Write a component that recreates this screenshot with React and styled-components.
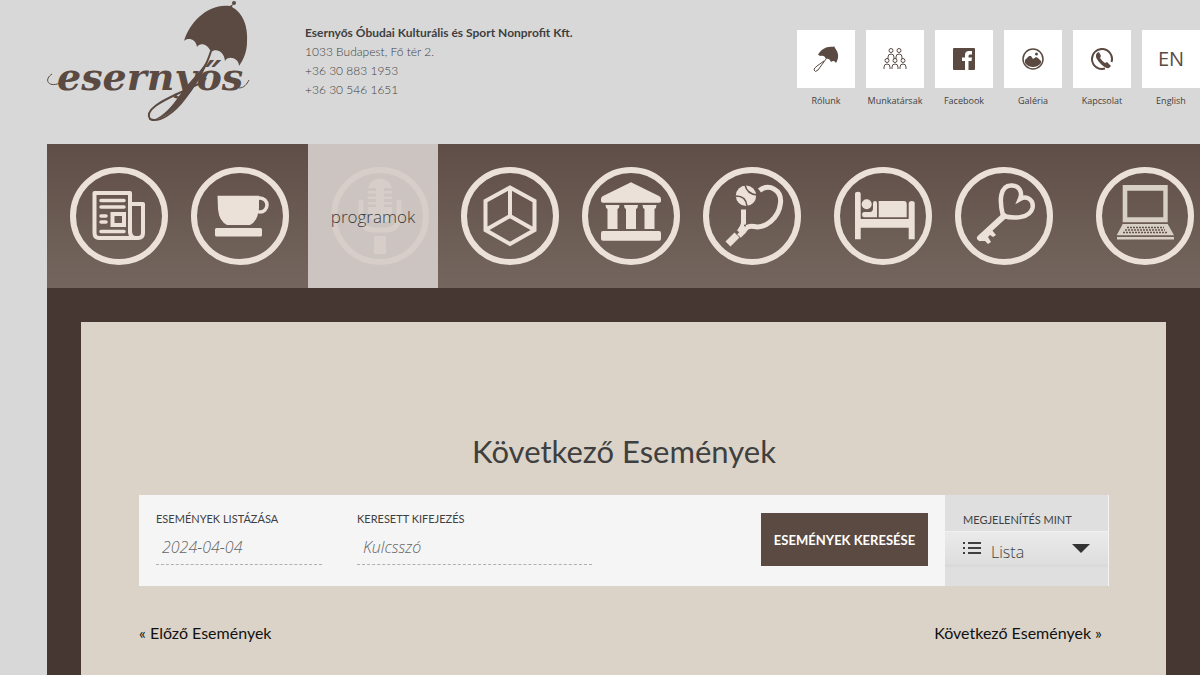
import React from 'react';
import styled, { createGlobalStyle, css } from 'styled-components';

const brown = '#5a4a42';
const cream = '#ece1d9';
const narrow = 'Lato, "Open Sans", sans-serif';
const light = '"Open Sans", "Noto Sans", sans-serif';

const GlobalStyle = createGlobalStyle`
  *, *::before, *::after { box-sizing: border-box; }
  body {
    margin: 0;
    background: #d8d8d8;
    color: #3f3f3f;
    font-family: ${narrow};
  }
`;

const Page = styled.div`
  display: flex;
  flex-direction: column;
  min-height: 100vh;
  padding-left: 47px;
`;

const Header = styled.header`
  display: flex;
  align-items: flex-start;
  height: 144px;
`;

const LogoLink = styled.a`
  display: block;
  width: 258px;
  height: 125px;
`;

const Address = styled.address`
  padding-top: 23px;
  font-style: normal;
  font-weight: 300;
  font-size: 12px;
  line-height: 19px;
  white-space: nowrap;
`;

const Company = styled.strong`
  display: block;
  font-weight: 700;
`;

const AddressLine = styled.span`
  display: block;
`;

const QuickLinks = styled.nav`
  display: flex;
  gap: 11px;
  margin-left: auto;
  padding-top: 30px;
`;

const QuickLink = styled.a`
  width: 58px;
  color: #3f3f3f;
  font-family: ${light};
  font-size: 9px;
  line-height: 26px;
  text-align: center;
  text-decoration: none;
  white-space: nowrap;
`;

const Tile = styled.span`
  display: flex;
  align-items: center;
  justify-content: center;
  height: 58px;
  background: #fff;
  color: ${brown};
  font-size: 20px;
`;

const MainNav = styled.nav`
  display: grid;
  grid-template-columns: 121fr 140fr 130fr 121fr 121fr 131fr 121fr 141fr 127fr;
  height: 144px;
  background: linear-gradient(#5f4e47, #74665e);
`;

const NavItem = styled.a`
  position: relative;
  padding: 23px 0 0 23px;
  color: ${cream};
  text-decoration: none;
  ${(p) => p.$active && css`
    background: #cbc4c0;
    color: #d7cec9;
  `}
`;

const NavLabel = styled.span`
  position: absolute;
  inset: 0;
  display: flex;
  align-items: center;
  justify-content: center;
  color: #3f3936;
  font-family: ${light};
  font-weight: 300;
  font-size: 17px;
`;

const Main = styled.main`
  display: flex;
  flex: 1;
  padding: 34px 34px 0;
  background: #463732;
`;

const Panel = styled.section`
  flex: 1;
  padding: 105px 57px 0 58px;
  background: #dbd3c7;
`;

const Title = styled.h1`
  margin: 0;
  font-weight: 400;
  font-size: 31px;
  line-height: 48px;
  text-align: center;
`;

const FilterBar = styled.form`
  display: flex;
  height: 91px;
  margin-top: 20px;
  background: #f5f5f5;
`;

const Filters = styled.div`
  display: flex;
  flex: 1;
  align-items: flex-start;
  gap: 35px;
  padding: 18px 17px;
`;

const Field = styled.div`
  flex: 0 1 ${(p) => p.$width}px;
`;

const Label = styled.label`
  display: block;
  font-size: 11px;
  line-height: 12px;
  text-transform: uppercase;
  white-space: nowrap;
`;

const TextInput = styled.input`
  display: block;
  width: 100%;
  height: 40px;
  padding: 5px 6px 0;
  border: 0;
  border-bottom: 1px dashed #b0b0b0;
  background: transparent;
  color: #666;
  font: italic 300 16px/20px ${light};
  &::placeholder { color: #666; opacity: 1; }
`;

const SearchButton = styled.button`
  width: 167px;
  height: 53px;
  margin-left: auto;
  padding: 0;
  border: 0;
  background: ${brown};
  color: #fff;
  font: 700 13px/20px ${narrow};
  text-transform: uppercase;
  white-space: nowrap;
`;

const ViewPicker = styled.div`
  width: 164px;
  padding-top: 19px;
  border-right: 1px solid #f5f5f5;
  background: #dfdfdf;
`;

const ViewLabel = styled(Label)`
  padding-left: 18px;
`;

const SelectWrap = styled.div`
  display: flex;
  align-items: center;
  height: 37px;
  margin-top: 5px;
  padding: 0 18px 3px;
  border-top: 1px solid #f0f0f0;
  background: linear-gradient(#eaeaea, #dedede 88%, #d8d8d8 94%, #dfdfdf);
`;

const Select = styled.select`
  flex: 1;
  height: 32px;
  padding: 6px 0 0 10px;
  border: 0;
  appearance: none;
  background: transparent;
  color: #3f3f3f;
  font: 300 16px/20px ${light};
`;

const Pager = styled.nav`
  display: flex;
  justify-content: space-between;
  padding: 35px 7px 0 0;
`;

const PagerLink = styled.a`
  color: #111;
  font-size: 16px;
  line-height: 24px;
  text-decoration: none;
`;

const Logo = () => (
  <svg width="203" height="125" viewBox="7 0 203 125" role="img" aria-label="Esernyős" fill={brown}>
    <circle cx="194" cy="3" r="2" />
    <path d="M193 4 L192 7 C203 13 208 26 207 42 C207 51 204 59 199 66 C199 58 188 55 185 61 C184 51 176 48 171 52 C168 44 160 42 157 47 C156 39 148 37 144 41 C150 21 169 3 190 6 Z" />
    <path d="M171 51 C166 68 157 82 146 97 C133 115 118 123 110 119 C104 110 122 101 137 94 C158 84 163 83 166 78" fill="none" stroke={brown} strokeWidth="2" />
    <path d="M168 59 C163 73 155 87 144 99 C134 112 122 119 113 120 C124 116 132 106 139 96 C150 80 160 73 168 59Z" />
    <path d="M12 74 C3 80 9 88 20 83 C28 80 33 78 37 75 M199 88 C204 88 207 84 209 80" fill="none" stroke={brown} />
    <text x="17" y="90" fontFamily='"DejaVu Serif", serif' fontStyle="italic" fontWeight="700" fontSize="38">esernyős</text>
  </svg>
);

const UmbrellaIcon = () => (
  <svg width="26" height="28" viewBox="0 0 26 28" fill={brown}>
    <path d="M21 1 L22 3 C26 8 26 13 23 18 C22 16 20 15 18 17 C17 14 15 13 13 14 C12 11 10 10 7 11 C6 10 6 10 5 10 C8 4 14 1 20 2Z" />
    <path d="M13 14 L5 25 Q2 28 1 25 Q1 23 4 21 L11 16" fill="none" stroke={brown} />
  </svg>
);

const Person = ({ x, y }) => (
  <g transform={`translate(${x} ${y})`}>
    <circle cx="0" cy="2.5" r="2" />
    <path d="M-3 11 V9 Q-3 6 0 6 Q3 6 3 9 V11" />
  </g>
);

const PeopleIcon = () => (
  <svg width="24" height="24" viewBox="0 0 24 24" fill="none" stroke={brown} strokeWidth="1">
    <Person x={8} y={1} />
    <Person x={16} y={1} />
    <Person x={4} y={11} />
    <Person x={12} y={11} />
    <Person x={20} y={11} />
  </svg>
);

const FacebookIcon = () => (
  <svg width="22" height="22" viewBox="0 0 22 22">
    <rect width="22" height="22" rx="1" fill={brown} />
    <path d="M12 22 V13 H9 V9.500 H12 V7 Q12 3 16 3 H19 V6.500 H17 Q15.500 6.500 15.500 8 V9.500 H19 L18.500 13 H15.500 V22Z" fill="#fff" />
  </svg>
);

const GalleryIcon = () => (
  <svg width="22" height="22" viewBox="0 0 22 22">
    <circle cx="11" cy="11" r="10" fill="none" stroke={brown} strokeWidth="1.500" />
    <path d="M3 15 L3 12 L7 8 L9 8 L11 11 L14 9 L16 10 L19 13 V15 Q16 19 11 19 Q6 19 3 15Z" fill={brown} />
    <circle cx="14.500" cy="6" r="1.500" fill={brown} />
  </svg>
);

const PhoneIcon = () => (
  <svg width="22" height="22" viewBox="0 0 22 22">
    <path d="M14 20.500 A10 10 0 1 1 20.500 14" fill="none" stroke={brown} strokeWidth="2" />
    <path d="M6 5 L8 4 L10 8 L9 10 Q11 13 14 15 L16 14 L20 18 L18 20 Q14 21 8 14 Q3 8 6 5Z" fill={brown} />
  </svg>
);

const Ring = ({ children }) => (
  <svg width="98" height="98" viewBox="0 0 98 98" fill="currentColor" aria-hidden="true">
    <circle cx="49" cy="49" r="46" fill="none" stroke="currentColor" strokeWidth="6" />
    {children}
  </svg>
);

const line = { fill: 'none', stroke: 'currentColor', strokeWidth: 4 };

const NewsIcon = () => (
  <Ring>
    <g {...line} strokeLinejoin="round" strokeLinecap="round">
      <path d="M60 66 V26 H24.500 V66 Q24.500 71 29 71 H68 Q73 71 73 66 V37 H62 M60 64 Q60 71 66 71" />
      <path d="M31 33.500 H54 M31 40 H54 M31 49 H36 M31 55 H36 M31 64.500 H54" strokeWidth="3.500" />
      <path d="M42.500 47 H54 V58 H42.500Z" strokeLinejoin="miter" />
    </g>
  </Ring>
);

const CupIcon = () => (
  <Ring>
    <path d="M26.500 28.700 H68 V41 Q67 54 59 58 H36 Q28 54 27 42Z" />
    <circle cx="69" cy="38" r="7" {...line} strokeWidth="3.500" />
    <rect x="24" y="61" width="47" height="8.500" rx="1.500" />
  </Ring>
);

const MicIcon = () => (
  <Ring>
    <path d="M37 21 A12.300 12.300 0 0 1 61 21 H53 V24 H61.300 V26.500 H53 V29.500 H61.300 V32 H53 V35 H61.300 V37.500 H53 V40 H61.300 V45 Q60 56 49 56 Q38 56 36.700 45 V40 H45 V37.500 H36.700 V35 H45 V32 H36.700 V29.500 H45 V26.500 H36.700 V24 H45 V21Z" />
    <path d="M30 35 V50 Q31 63 43 63 H55 Q67 63 68 50 V35" {...line} strokeWidth="5" strokeLinecap="round" />
    <rect x="43" y="69" width="12" height="18" />
  </Ring>
);

const CubeIcon = () => (
  <Ring>
    <path d="M49 20.500 L73.500 34 V63 L49 77 L24.500 63 V34Z M49 20.500 V49 M24.500 63 L49 49 L73.500 63" {...line} />
  </Ring>
);

const Column = ({ x }) => <path d={`M${x} 38 H${x + 14} Q${x + 14} 41 ${x + 12} 42 V62 H${x + 2} V42 Q${x} 41 ${x} 38Z`} />;

const BankIcon = () => (
  <Ring>
    <path d="M49 15.300 L77 29 Q79 30 79 32 V34 Q79 35.700 77 35.700 H21 Q19 35.700 19 34 V32 Q19 30 21 29Z" />
    <Column x={23.5} />
    <Column x={42} />
    <Column x={60.5} />
    <rect x="19" y="64" width="60" height="9.700" rx="2" />
  </Ring>
);

const TennisIcon = () => (
  <Ring>
    <circle cx="43" cy="28.700" r="10.200" />
    <path d="M33 29 Q43 29 44 39 M42 18 Q44 27 54 28" fill="none" stroke="#65554e" strokeWidth="1.500" />
    <path d="M56.500 23.500 C66 16 79 23 77.500 36 C76 51 62 62 51 59.500 Q44 58 41 64 L36 69 M40.500 42.500 V56 Q40 60 36 65" {...line} strokeWidth="5" />
    <path d="M34 68 L25 77" {...line} strokeWidth="7" />
    <circle cx="42" cy="58.500" r="1" fill="#65554e" />
  </Ring>
);

const BedIcon = () => (
  <Ring>
    <path d="M21 27 Q21 24.700 24 24.700 Q26.700 24.700 26.700 27 V52 H74.700 V36 Q75 34 77.700 34 Q80.700 34 80.700 36 V72.300 H74.700 V60.700 H26.700 V72.300 H21Z" />
    <circle cx="32.700" cy="37.300" r="5" />
    <path d="M30 45 H36 Q39 45 39 41 V36 Q39 34 41 34 Q43 34 43 36 V50.300 H30 Q28 50 28 47.500 Q28 45 30 45Z" />
    <path d="M44.700 34 H70 Q72.700 34 72.700 37 V50.300 H44.700Z" />
  </Ring>
);

const KeyIcon = () => (
  <Ring>
    <path d="M48 49 C44 33 45 19 56 18.500 C64 18 68 25 65 32 C72 28 79 33 77.500 41 C75 51 60 52 48 49Z" {...line} strokeWidth="4.500" />
    <path d="M49 49 L25 71" {...line} strokeWidth="6" strokeLinecap="round" />
    <path d="M36 62 L41 68 L38 70 L35 68 L33 70 L36 75 L33 77 L30 74 L26 74 L25 70Z" />
  </Ring>
);

const LaptopIcon = () => (
  <Ring>
    <g fill="#d9d0c5">
      <path fillRule="evenodd" d="M26.700 18 H71.700 V55.300 H26.700Z M31.300 23.700 V50.300 H67.300 V23.700Z" />
      <path d="M26.700 57 H71.700 L78 68.300 H20.700Z M21 70 H78 V72.500 H21Z" />
    </g>
    <path d="M31 60.500 H68 M29 63 H69 M27 65.500 H71" fill="none" stroke="#65554e" strokeWidth="1.500" strokeDasharray="2 1" />
  </Ring>
);

const ListIcon = () => (
  <svg width="18" height="13" viewBox="0 0 18 13" fill="#3f3f3f" aria-hidden="true">
    <path d="M0 0h2v2H0z M5 0h13v2H5z M0 5h2v2H0z M5 5h13v2H5z M0 10h2v2H0z M5 10h13v2H5z" />
  </svg>
);

const ArrowIcon = () => (
  <svg width="18" height="9" viewBox="0 0 18 9" fill="#333" aria-hidden="true">
    <path d="M0 0h18L9 9z" />
  </svg>
);

const quickLinks = [
  ['Rólunk', <UmbrellaIcon />],
  ['Munkatársak', <PeopleIcon />],
  ['Facebook', <FacebookIcon />],
  ['Galéria', <GalleryIcon />],
  ['Kapcsolat', <PhoneIcon />],
  ['English', 'EN'],
];

const sections = [
  { name: 'hírek', Icon: NewsIcon },
  { name: 'kávézó', Icon: CupIcon },
  { name: 'programok', Icon: MicIcon, active: true },
  { name: 'terek', Icon: CubeIcon },
  { name: 'múzeum', Icon: BankIcon },
  { name: 'sport', Icon: TennisIcon },
  { name: 'szállás', Icon: BedIcon },
  { name: 'bérlés', Icon: KeyIcon },
  { name: 'média', Icon: LaptopIcon },
];

export default function App() {
  return (
    <Page>
      <GlobalStyle />
      <Header>
        <LogoLink href="#"><Logo /></LogoLink>
        <Address>
          <Company>Esernyős Óbudai Kulturális és Sport Nonprofit Kft.</Company>
          <AddressLine>1033 Budapest, Fő tér 2.</AddressLine>
          <AddressLine>+36 30 883 1953</AddressLine>
          <AddressLine>+36 30 546 1651</AddressLine>
        </Address>
        <QuickLinks>
          {quickLinks.map(([name, icon]) => (
            <QuickLink href="#" key={name}>
              <Tile>{icon}</Tile>
              {name}
            </QuickLink>
          ))}
        </QuickLinks>
      </Header>
      <MainNav>
        {sections.map(({ name, Icon, active }) => (
          <NavItem href="#" key={name} $active={active} aria-label={name}>
            <Icon />
            {active && <NavLabel>{name}</NavLabel>}
          </NavItem>
        ))}
      </MainNav>
      <Main>
        <Panel>
          <Title>Következő Események</Title>
          <FilterBar>
            <Filters>
              <Field $width={166}>
                <Label htmlFor="date">Események listázása</Label>
                <TextInput id="date" defaultValue="2024-04-04" />
              </Field>
              <Field $width={235}>
                <Label htmlFor="keyword">Keresett kifejezés</Label>
                <TextInput id="keyword" placeholder="Kulcsszó" />
              </Field>
              <SearchButton type="button">Események keresése</SearchButton>
            </Filters>
            <ViewPicker>
              <ViewLabel htmlFor="view">Megjelenítés mint</ViewLabel>
              <SelectWrap>
                <ListIcon />
                <Select id="view"><option>Lista</option></Select>
                <ArrowIcon />
              </SelectWrap>
            </ViewPicker>
          </FilterBar>
          <Pager>
            <PagerLink href="#">« Előző Események</PagerLink>
            <PagerLink href="#">Következő Események »</PagerLink>
          </Pager>
        </Panel>
      </Main>
    </Page>
  );
}
